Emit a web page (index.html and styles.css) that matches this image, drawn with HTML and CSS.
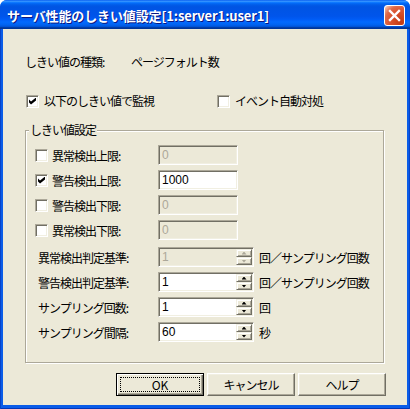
FILE: index.html
```html
<!DOCTYPE html>
<html lang="ja">
<head>
<meta charset="utf-8">
<link rel="stylesheet" href="styles.css">
</head>
<body>
<div class="window">
  <div class="titlebar">
    <span class="title">サーバ性能のしきい値設定[1:server1:user1]</span>
    <div class="close"><svg width="19" height="19" viewBox="0 0 19 19"><path d="M5 5L14 14M14 5L5 14" stroke="#fff" stroke-width="2.4" stroke-linecap="square"/></svg></div>
  </div>
  <div class="frame">
    <div class="client">
      <div class="type-row"><span>しきい値の種類:</span><span>ページフォルト数</span></div>
      <div class="checks-row">
        <label class="chk"><span class="box checked"></span><span>以下のしきい値で監視</span></label>
        <label class="chk"><span class="box"></span><span>イベント自動対処</span></label>
      </div>
      <div class="group">
        <span class="group-title">しきい値設定</span>
        <div class="rows">
          <div class="grow"><label class="chk"><span class="box"></span><span>異常検出上限:</span></label><div class="edit disabled">0</div></div>
          <div class="grow"><label class="chk"><span class="box checked"></span><span>警告検出上限:</span></label><div class="edit">1000</div></div>
          <div class="grow"><label class="chk"><span class="box"></span><span>警告検出下限:</span></label><div class="edit disabled">0</div></div>
          <div class="grow"><label class="chk"><span class="box"></span><span>異常検出下限:</span></label><div class="edit disabled">0</div></div>
        </div>
        <div class="rows spins">
          <div class="grow"><span class="lbl">異常検出判定基準:</span><div class="spin disabled"><span class="val">1</span><span class="arrows"><span class="arr up"></span><span class="arr down"></span></span></div><span class="unit">回／サンプリング回数</span></div>
          <div class="grow"><span class="lbl">警告検出判定基準:</span><div class="spin"><span class="val">1</span><span class="arrows"><span class="arr up"></span><span class="arr down"></span></span></div><span class="unit">回／サンプリング回数</span></div>
          <div class="grow"><span class="lbl">サンプリング回数:</span><div class="spin"><span class="val">1</span><span class="arrows"><span class="arr up"></span><span class="arr down"></span></span></div><span class="unit">回</span></div>
          <div class="grow"><span class="lbl">サンプリング間隔:</span><div class="spin"><span class="val">60</span><span class="arrows"><span class="arr up"></span><span class="arr down"></span></span></div><span class="unit">秒</span></div>
        </div>
      </div>
      <div class="buttons">
        <button class="btn default"><span class="focus">OK</span></button>
        <button class="btn"><span class="focus">キャンセル</span></button>
        <button class="btn"><span class="focus">ヘルプ</span></button>
      </div>
    </div>
  </div>
</div>
</body>
</html>
```
FILE: styles.css
```css
* { box-sizing: border-box; margin: 0; padding: 0; }
body {
  margin: 0;
  background: #fff;
  font-family: "Noto Sans CJK JP", "MS UI Gothic", sans-serif;
  font-size: 12px;
  letter-spacing: -1px;
  color: #000;
}
.window {
  width: 410px;
  height: 409px;
  display: flex;
  flex-direction: column;
  border-radius: 7px 7px 0 0;
  overflow: hidden;
  background: #0055E5;
}
.titlebar {
  height: 29px;
  flex: none;
  display: flex;
  align-items: center;
  padding: 0 5px 0 7px;
  background: linear-gradient(180deg, #0058EE 0%, #3A93FF 4%, #288EFF 6%, #127DFF 8%, #036FFC 10%, #0262EE 14%, #0057E5 20%, #0054E3 24%, #0055EB 56%, #005BF5 66%, #026AFE 76%, #0062EF 86%, #0052D6 92%, #0040AB 94%, #003092 100%);
}
.title {
  flex: 1;
  color: #fff;
  font-weight: bold;
  font-size: 13px;
  letter-spacing: -0.12px;
  line-height: 16px;
  padding-top: 2px;
  white-space: nowrap;
  text-shadow: 1px 1px 0 #0A1883;
}
.close {
  width: 21px;
  height: 21px;
  flex: none;
  border: 1px solid #fff;
  border-radius: 3px;
  background: radial-gradient(circle at 85% 85%, #C23A12 0%, #DA5430 50%, #E06A48 72%, #F2B8A2 92%, #fff 100%);
  display: flex;
  align-items: center;
  justify-content: center;
  margin-top: 2px;
}
.frame {
  flex: 1;
  display: flex;
  padding: 0 3px 4px;
  background: #0A5CE8;
  box-shadow: inset 1px 0 0 #0843C8, inset -1px 0 0 #0843C8, inset 0 -1px 0 #0336B8;
}
.client {
  flex: 1;
  background: #ECE9D8;
  display: flex;
  flex-direction: column;
}
.type-row {
  margin-top: 25px;
  height: 16px;
  line-height: 16px;
  padding-left: 22px;
  display: grid;
  grid-template-columns: 106px auto;
}
.checks-row {
  margin-top: 23px;
  height: 16px;
  line-height: 16px;
  padding-left: 23px;
  display: grid;
  grid-template-columns: 191px auto;
}
.chk {
  display: flex;
  align-items: center;
  gap: 5px;
  white-space: nowrap;
}
.box {
  width: 13px;
  height: 13px;
  flex: none;
  background: #fff;
  border: 1px solid;
  border-color: #ACA899 #fff #fff #ACA899;
  box-shadow: inset 1px 1px 0 #716F64, inset -1px -1px 0 #F1EFE2;
  position: relative;
}
.box.checked::after {
  content: "";
  position: absolute;
  left: 2px;
  top: 2px;
  width: 7px;
  height: 7px;
  background: #000;
  clip-path: polygon(0 28%, 29% 57%, 100% 0, 100% 43%, 29% 100%, 0 71%);
}
.group {
  position: relative;
  margin: 21px 0 0 22px;
  width: 359px;
  border: 1px solid #ACA899;
  box-shadow: inset 1px 1px 0 #fff, 1px 1px 0 #fff;
  padding: 14px 0 20px;
  display: flex;
  flex-direction: column;
  gap: 7px;
}
.group-title {
  position: absolute;
  top: -9px;
  left: 3px;
  padding: 0 1px;
  line-height: 16px;
  background: #ECE9D8;
}
.rows {
  display: flex;
  flex-direction: column;
  gap: 5px;
}
.grow {
  height: 20px;
  display: grid;
  grid-template-columns: 132px auto auto;
  align-items: center;
  justify-content: start;
}
.grow .chk { padding-left: 9px; gap: 4px; }
.lbl { padding-left: 12px; white-space: nowrap; }
.edit {
  width: 80px;
  height: 20px;
  border: 1px solid;
  border-color: #ACA899 #fff #fff #ACA899;
  box-shadow: inset 1px 1px 0 #716F64, inset -1px -1px 0 #F1EFE2;
  background: #fff;
  padding-left: 3px;
  line-height: 18px;
  font-family: "Liberation Sans", "Noto Sans CJK JP", sans-serif;
  font-size: 12px;
  letter-spacing: 0;
}
.edit.disabled { background: #ECE9D8; color: #ACA899; }
.spin {
  width: 96px;
  height: 20px;
  display: flex;
  padding: 1px;
  border: 1px solid;
  border-color: #ACA899 #fff #fff #ACA899;
  box-shadow: inset 1px 1px 0 #716F64, inset -1px -1px 0 #F1EFE2;
  background: #fff;
}
.spin.disabled { background: #ECE9D8; color: #ACA899; }
.val {
  flex: 1;
  padding-left: 2px;
  line-height: 16px;
  font-family: "Liberation Sans", "Noto Sans CJK JP", sans-serif;
  font-size: 12px;
  letter-spacing: 0;
}
.arrows {
  width: 16px;
  display: flex;
  flex-direction: column;
}
.arr {
  height: 8px;
  background: #ECE9D8;
  border: 1px solid;
  border-color: #F1EFE2 #716F64 #716F64 #F1EFE2;
  box-shadow: inset 1px 1px 0 #fff, inset -1px -1px 0 #ACA899;
  display: flex;
  align-items: center;
  justify-content: center;
}
.arr::after {
  content: "";
  width: 5px;
  height: 3px;
  background: #000;
}
.arr.up::after { clip-path: polygon(50% 0, 100% 100%, 0 100%); }
.arr.down::after { clip-path: polygon(0 0, 100% 0, 50% 100%); }
.spin.disabled .arr::after { background: #ACA899; }
.unit { padding-left: 5px; white-space: nowrap; }
.buttons {
  margin-top: 10px;
  display: flex;
  justify-content: flex-end;
  gap: 3px;
  padding-right: 21px;
}
.btn {
  width: 88px;
  height: 23px;
  background: #ECE9D8;
  border: 1px solid;
  border-color: #fff #716F64 #716F64 #fff;
  box-shadow: inset -1px -1px 0 #ACA899, inset 1px 1px 0 #F1EFE2;
  font-family: "Noto Sans CJK JP", sans-serif;
  font-size: 12px;
  letter-spacing: -1px;
  color: #000;
  padding: 2px;
  display: flex;
}
.btn.default {
  border: 1px solid #000;
  box-shadow: inset 1px 1px 0 #fff, inset -1px -1px 0 #716F64, inset -2px -2px 0 #ACA899;
}
.focus {
  flex: 1;
  display: flex;
  align-items: center;
  justify-content: center;
  border: 1px dotted transparent;
  margin: 1px;
  line-height: 13px;
}
.btn.default .focus { border-color: #000; letter-spacing: 0; }
```
